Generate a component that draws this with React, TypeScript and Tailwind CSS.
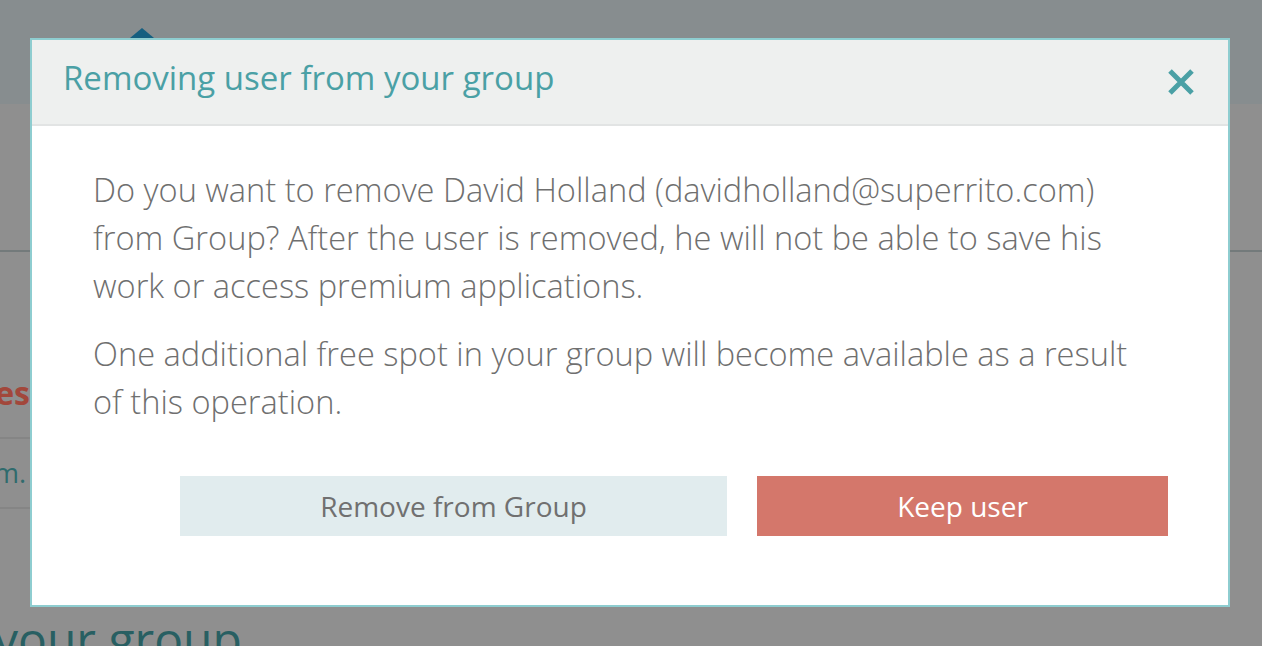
import React from "react";

function CloseIcon() {
    return (
        <svg width="30" height="30" viewBox="0 0 30 30" className="text-[#4aa0a5]">
            <path d="M4 4 L26 26 M26 4 L4 26" stroke="currentColor" strokeWidth="5" strokeLinecap="butt" />
        </svg>
    );
}

function Backdrop() {
    return (
        <div className="h-[646px] w-full bg-[#8f8f8f] flex flex-col overflow-hidden">
            <div className="h-[104px] shrink-0 bg-[#878d8f] flex items-end px-[130px]">
                <div className="w-0 h-0 border-l-[12px] border-r-[12px] border-b-[10px] border-l-transparent border-r-transparent border-b-[#155f80] mb-[66px]" />
            </div>
            <div className="h-[146px] shrink-0" />
            <div className="h-[2px] shrink-0 bg-[#737a7b]" />
            <div className="h-[121px] shrink-0" />
            <div className="h-[40px] shrink-0 text-[32px] leading-[40px] font-bold text-[#a2473b] -ml-[30px] w-[60px] text-right">es</div>
            <div className="h-[24px] shrink-0" />
            <div className="h-[2px] shrink-0 bg-[#858585] w-[40px]" />
            <div className="h-[68px] shrink-0 flex items-center text-[27px] text-[#2f6b6d] -ml-[6px]">m.</div>
            <div className="h-[2px] shrink-0 bg-[#858585] w-[40px]" />
            <div className="h-[106px] shrink-0" />
            <div className="h-[48px] shrink-0 text-[48px] leading-[48px] text-[#285f62] -ml-[6px]">your group</div>
        </div>
    );
}

export default function App() {
    return (
        <div className="relative h-[646px] w-[1262px] overflow-hidden font-['Open_Sans',sans-serif]">
            <Backdrop />
            <div className="absolute left-[30px] top-[38px] w-[1200px] h-[569px] border-2 border-[#8ecdd0] bg-white flex flex-col">
                <div className="h-[86px] shrink-0 bg-[#eef0ef] border-b-2 border-[#e2e4e4] flex items-center justify-between pl-[31px] pr-[32px]">
                    <h2 className="text-[33px] leading-[40px] text-[#4aa0a5] font-normal -mt-[8px]">Removing user from your group</h2>
                    <CloseIcon />
                </div>
                <div className="pl-[61px] pr-[60px] pt-[40px] flex flex-col">
                    <p className="text-[32.6px] leading-[48px] font-light text-[#6f6f6f] pr-[30px]">
                        Do you want to remove David Holland (davidholland@superrito.com) from Group? After the user is removed, he will not be able to save his work or access premium applications.
                    </p>
                    <p className="mt-[20px] text-[32.6px] leading-[48px] font-light text-[#6f6f6f] pr-[30px]">
                        One additional free spot in your group will become available as a result of this operation.
                    </p>
                    <div className="mt-[50px] flex justify-end gap-[30px]">
                        <button className="w-[547px] h-[60px] bg-[#e1ecee] text-[28px] text-[#707070]">Remove from Group</button>
                        <button className="w-[411px] h-[60px] bg-[#d4776b] text-[28px] text-white font-medium">Keep user</button>
                    </div>
                </div>
            </div>
        </div>
    );
}
